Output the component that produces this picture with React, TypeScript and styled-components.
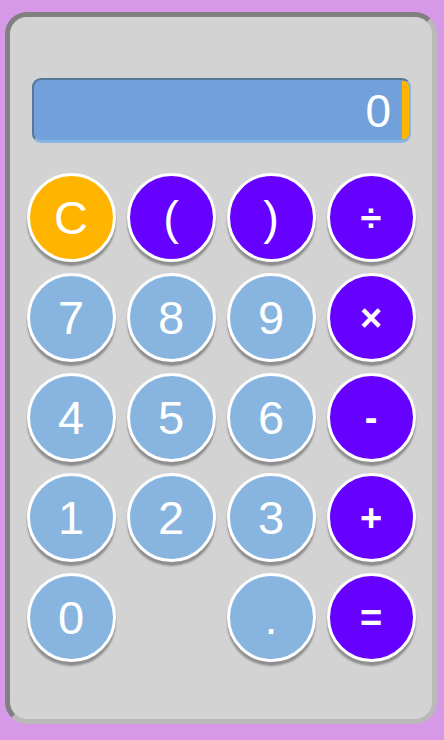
import React from "react";
import styled, { createGlobalStyle } from "styled-components";

const Global = createGlobalStyle`
  html, body { margin: 0; padding: 0; }
  body {
    background: #d898e8;
    font-family: "Liberation Sans", Arial, sans-serif;
    width: 444px;
    height: 740px;
    overflow: hidden;
  }
`;

const Page = styled.div`
  padding: 12px 7px 16px 5px;
  box-sizing: border-box;
  height: 740px;
`;

const Body = styled.div`
  box-sizing: border-box;
  height: 712px;
  width: 432px;
  background: #d3d3d3;
  border: 5px solid;
  border-color: #808080 #b9b9b9 #b9b9b9 #808080;
  border-radius: 22px;
  padding: 61px 16px 0 16px;
  display: flex;
  flex-direction: column;
`;

const Display = styled.div`
  box-sizing: border-box;
  margin: 0 5px 0 6px;
  height: 65px;
  border: 2px solid;
  border-color: #557896 #88b6e0 #88b6e0 #557896;
  border-bottom-width: 3px;
  border-radius: 9px;
  background: #72a0da;
  display: flex;
  align-items: stretch;
  overflow: hidden;
`;

const Readout = styled.div`
  flex: 1;
  display: flex;
  align-items: center;
  justify-content: flex-end;
  padding: 2px 11px 0 0;
  color: #fff;
  font-size: 46px;
  border-right: 7px solid #ffb400;
  margin: 1px 0 1px 0;
`;

const Keys = styled.div`
  margin-top: 30px;
  display: grid;
  grid-template-columns: repeat(4, 89px);
  grid-auto-rows: 89px;
  column-gap: 11px;
  row-gap: 11px;
  padding-left: 0.5px;
`;

type Kind = "num" | "op" | "paren" | "clear";

const colors: Record<Kind, string> = {
  num: "#87b5e0",
  op: "#6600ff",
  paren: "#6600ff",
  clear: "#ffb400",
};

const Key = styled.button<{ $kind: Kind; $col?: number }>`
  box-sizing: border-box;
  width: 89px;
  height: 89px;
  border-radius: 50%;
  border: 3px solid #fff;
  background: ${(p) => colors[p.$kind]};
  color: #fff;
  box-shadow: 0 4px 2px #8e8e8e;
  padding: 0;
  display: flex;
  align-items: center;
  justify-content: center;
  font-family: "Liberation Sans", Arial, sans-serif;
  font-size: ${(p) => (p.$kind === "op" ? "38px" : "47px")};
  font-weight: ${(p) => (p.$kind === "op" ? 700 : 400)};
  grid-column: ${(p) => (p.$col ? p.$col : "auto")};
  line-height: 1;
`;

const rows: { label: string; kind: Kind; col?: number }[] = [
  { label: "C", kind: "clear" },
  { label: "(", kind: "paren" },
  { label: ")", kind: "paren" },
  { label: "÷", kind: "op" },
  { label: "7", kind: "num" },
  { label: "8", kind: "num" },
  { label: "9", kind: "num" },
  { label: "×", kind: "op" },
  { label: "4", kind: "num" },
  { label: "5", kind: "num" },
  { label: "6", kind: "num" },
  { label: "-", kind: "op" },
  { label: "1", kind: "num" },
  { label: "2", kind: "num" },
  { label: "3", kind: "num" },
  { label: "+", kind: "op" },
  { label: "0", kind: "num" },
  { label: ".", kind: "num", col: 3 },
  { label: "=", kind: "op" },
];

export default function App() {
  return (
    <>
      <Global />
      <Page>
        <Body>
          <Display>
            <Readout>0</Readout>
          </Display>
          <Keys>
            {rows.map((r, i) => (
              <Key key={i} $kind={r.kind} $col={r.col}>
                {r.label}
              </Key>
            ))}
          </Keys>
        </Body>
      </Page>
    </>
  );
}
